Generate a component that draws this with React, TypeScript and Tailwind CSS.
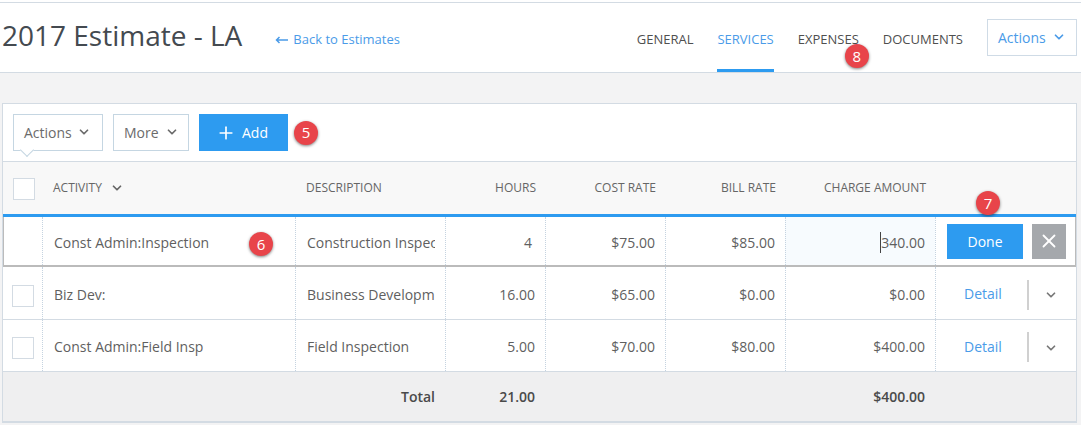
import { ChevronDown, Plus, X } from "lucide-react";

const cols = "grid grid-cols-[39px_253px_150px_100px_120px_120px_150px_1fr]";
const cell = "flex items-center border-l border-dotted border-[#c5d3e0] text-[14px] text-[#5f5f5f]";

const rows = [
  { activity: "Biz Dev:", desc: "Business Developm", hours: "16.00", cost: "$65.00", bill: "$0.00", amount: "$0.00", height: "h-[53px]" },
  { activity: "Const Admin:Field Insp", desc: "Field Inspection", hours: "5.00", cost: "$70.00", bill: "$80.00", amount: "$400.00", height: "h-[52px]" },
];

function Badge({ n, className }: { n: number; className: string }) {
  return (
    <span className={"absolute z-10 flex h-6 w-6 items-center justify-center rounded-full bg-[#e8444a] text-[15px] text-white shadow-[0_1px_3px_rgba(0,0,0,0.5)] " + className}>
      {n}
    </span>
  );
}

function Check() {
  return <span className="block h-[22px] w-[22px] border border-[#d3dbe3] bg-white" />;
}

export default function App() {
  return (
    <div className="relative h-[425px] w-[1081px] overflow-hidden bg-[#f3f3f4] font-['Open_Sans',sans-serif]">
      <div className="h-[2px] bg-white" />
      <header className="flex h-[71px] items-center border-y border-[#d3dbe3] bg-white pr-1">
        <h1 className="mb-[6px] ml-[2px] text-[28px] leading-none text-[#444a50]">2017 Estimate - LA</h1>
        <a className="ml-[33px] mt-1 flex items-center gap-[5px] text-[13px] text-[#4a9be8]">
          <svg width="13" height="8" viewBox="0 0 13 8" fill="none" stroke="currentColor" strokeWidth="1.5">
            <path d="M13 4H1.5M4.5 1L1.5 4l3 3" />
          </svg>
          Back to Estimates
        </a>
        <nav className="ml-auto flex h-full items-stretch gap-6 text-[13px] text-[#4f4f4f]">
          <span className="flex items-center pt-[5px]">GENERAL</span>
          <span className="flex items-center border-b-[3px] border-[#2d9bf0] pt-[8px] text-[#4a9be8]">SERVICES</span>
          <span className="relative flex items-center pt-[5px]">
            EXPENSES
            <Badge n={8} className="left-[47px] top-[41px]" />
          </span>
          <span className="flex items-center pt-[5px]">DOCUMENTS</span>
        </nav>
        <button className="ml-6 flex h-[37px] w-[90px] items-center gap-[6px] border border-[#cfdbe6] pb-[1px] pl-[10px] text-[14px] text-[#4a9be8]">
          Actions <ChevronDown size={14} strokeWidth={3} />
        </button>
      </header>

      <section className="relative mx-[2px] mt-[30px] w-[1075px] border border-[#d3dbe3] bg-white">
        <div className="flex h-[57px] items-center gap-[10px] pl-[10px]">
          <button className="relative flex h-[37px] w-[90px] items-center gap-[5px] border border-[#c5d6e2] pb-[1px] pl-[10px] text-[14px] text-[#6b6b6b]">
            Actions <ChevronDown size={14} strokeWidth={3} />
            <span className="absolute left-[8px] top-[30px] h-[10px] w-[10px] rotate-45 border-b border-r border-[#c5d6e2] bg-white" />
          </button>
          <button className="flex h-[37px] w-[76px] items-center gap-[6px] border border-[#c5d6e2] pb-[1px] pl-[10px] text-[14px] text-[#6b6b6b]">
            More <ChevronDown size={14} strokeWidth={3} />
          </button>
          <button className="flex h-[37px] w-[89px] items-center gap-[6px] bg-[#2d9bf0] pl-[17px] text-[14px] font-medium text-white">
            <Plus size={20} /> Add
          </button>
          <span className="-ml-1 flex h-6 w-6 items-center justify-center rounded-full bg-[#e8444a] text-[15px] text-white shadow-[0_1px_3px_rgba(0,0,0,0.5)]">5</span>
        </div>

        <div className={cols + " h-[53px] border-t border-[#d3dbe3] bg-[#f8f8f8] text-[12px] text-[#666]"}>
          <div className="flex items-center pl-[10px] pt-[1px]"><Check /></div>
          <div className="flex items-center gap-2 pl-[11px]">ACTIVITY <ChevronDown size={14} strokeWidth={3} /></div>
          <div className="flex items-center pl-[11px]">DESCRIPTION</div>
          <div className="flex items-center justify-end pr-[9px]">HOURS</div>
          <div className="flex items-center justify-end pr-[9px]">COST RATE</div>
          <div className="flex items-center justify-end pr-[9px]">BILL RATE</div>
          <div className="flex items-center justify-end pr-[9px]">CHARGE AMOUNT</div>
          <div />
        </div>

        <div className={cols + " h-[53px] border-b-2 border-t-[3px] border-b-[#bbb] border-t-[#2d9bf0] shadow-[inset_1px_0_#bbb,inset_-1px_0_#bbb]"}>
          <div />
          <div className={cell + " relative pl-[11px] pt-[2px]"}>
            Const Admin:Inspection
            <Badge n={6} className="left-[206px] top-[15px]" />
          </div>
          <div className={cell + " overflow-hidden pl-[11px] pr-[10px] pt-[2px]"}><span className="overflow-hidden whitespace-nowrap">Construction Inspection</span></div>
          <div className={cell + " justify-end pr-[13px] pt-[2px]"}>4</div>
          <div className={cell + " justify-end pr-[10px] pt-[2px]"}>$75.00</div>
          <div className={cell + " justify-end pr-[10px] pt-[2px]"}>$85.00</div>
          <div className={cell + " justify-end bg-[#f7fbfe] pr-[10px] pt-[2px]"}>
            <span className="border-l border-[#444]">340.00</span>
          </div>
          <div className={cell + " relative gap-[9px] pl-[11px]"}>
            <button className="flex h-[35px] w-[76px] items-center justify-center bg-[#2d9bf0] text-[14px] text-white">Done</button>
            <button className="flex h-[35px] w-[34px] items-center justify-center bg-[#a5a8ac] text-white"><X size={22} /></button>
            <Badge n={7} className="left-[40px] top-[-26px]" />
          </div>
        </div>

        {rows.map((r) => (
          <div key={r.activity} className={cols + " border-b border-[#d3dbe3] " + r.height}>
            <div className="flex items-center pl-[9px] pt-[5px]"><Check /></div>
            <div className={cell + " pl-[11px] pt-[2px]"}>{r.activity}</div>
            <div className={cell + " pl-[11px] pt-[2px]"}>{r.desc}</div>
            <div className={cell + " justify-end pr-[10px] pt-[2px]"}>{r.hours}</div>
            <div className={cell + " justify-end pr-[10px] pt-[2px]"}>{r.cost}</div>
            <div className={cell + " justify-end pr-[10px] pt-[2px]"}>{r.bill}</div>
            <div className={cell + " justify-end pr-[10px] pt-[2px]"}>{r.amount}</div>
            <div className={cell + " pl-[28px] pt-[1px]"}>
              <a className="text-[#4a9be8]">Detail</a>
              <span className="ml-[25px] mt-[2px] h-[30px] w-[2px] bg-[#d0d0d0]" />
              <ChevronDown size={14} strokeWidth={3} className="ml-[15px] mt-[3px] text-[#777]" />
            </div>
          </div>
        ))}

        <div className={cols + " h-[50px] border-b border-[#d3dbe3] bg-[#efeff0] text-[14px] font-semibold text-[#4a4a4a]"}>
          <div />
          <div />
          <div className="flex items-center justify-end pr-[10px]">Total</div>
          <div className="flex items-center justify-end pr-[10px]">21.00</div>
          <div />
          <div />
          <div className="flex items-center justify-end pr-[10px]">$400.00</div>
          <div />
        </div>
      </section>
    </div>
  );
}
